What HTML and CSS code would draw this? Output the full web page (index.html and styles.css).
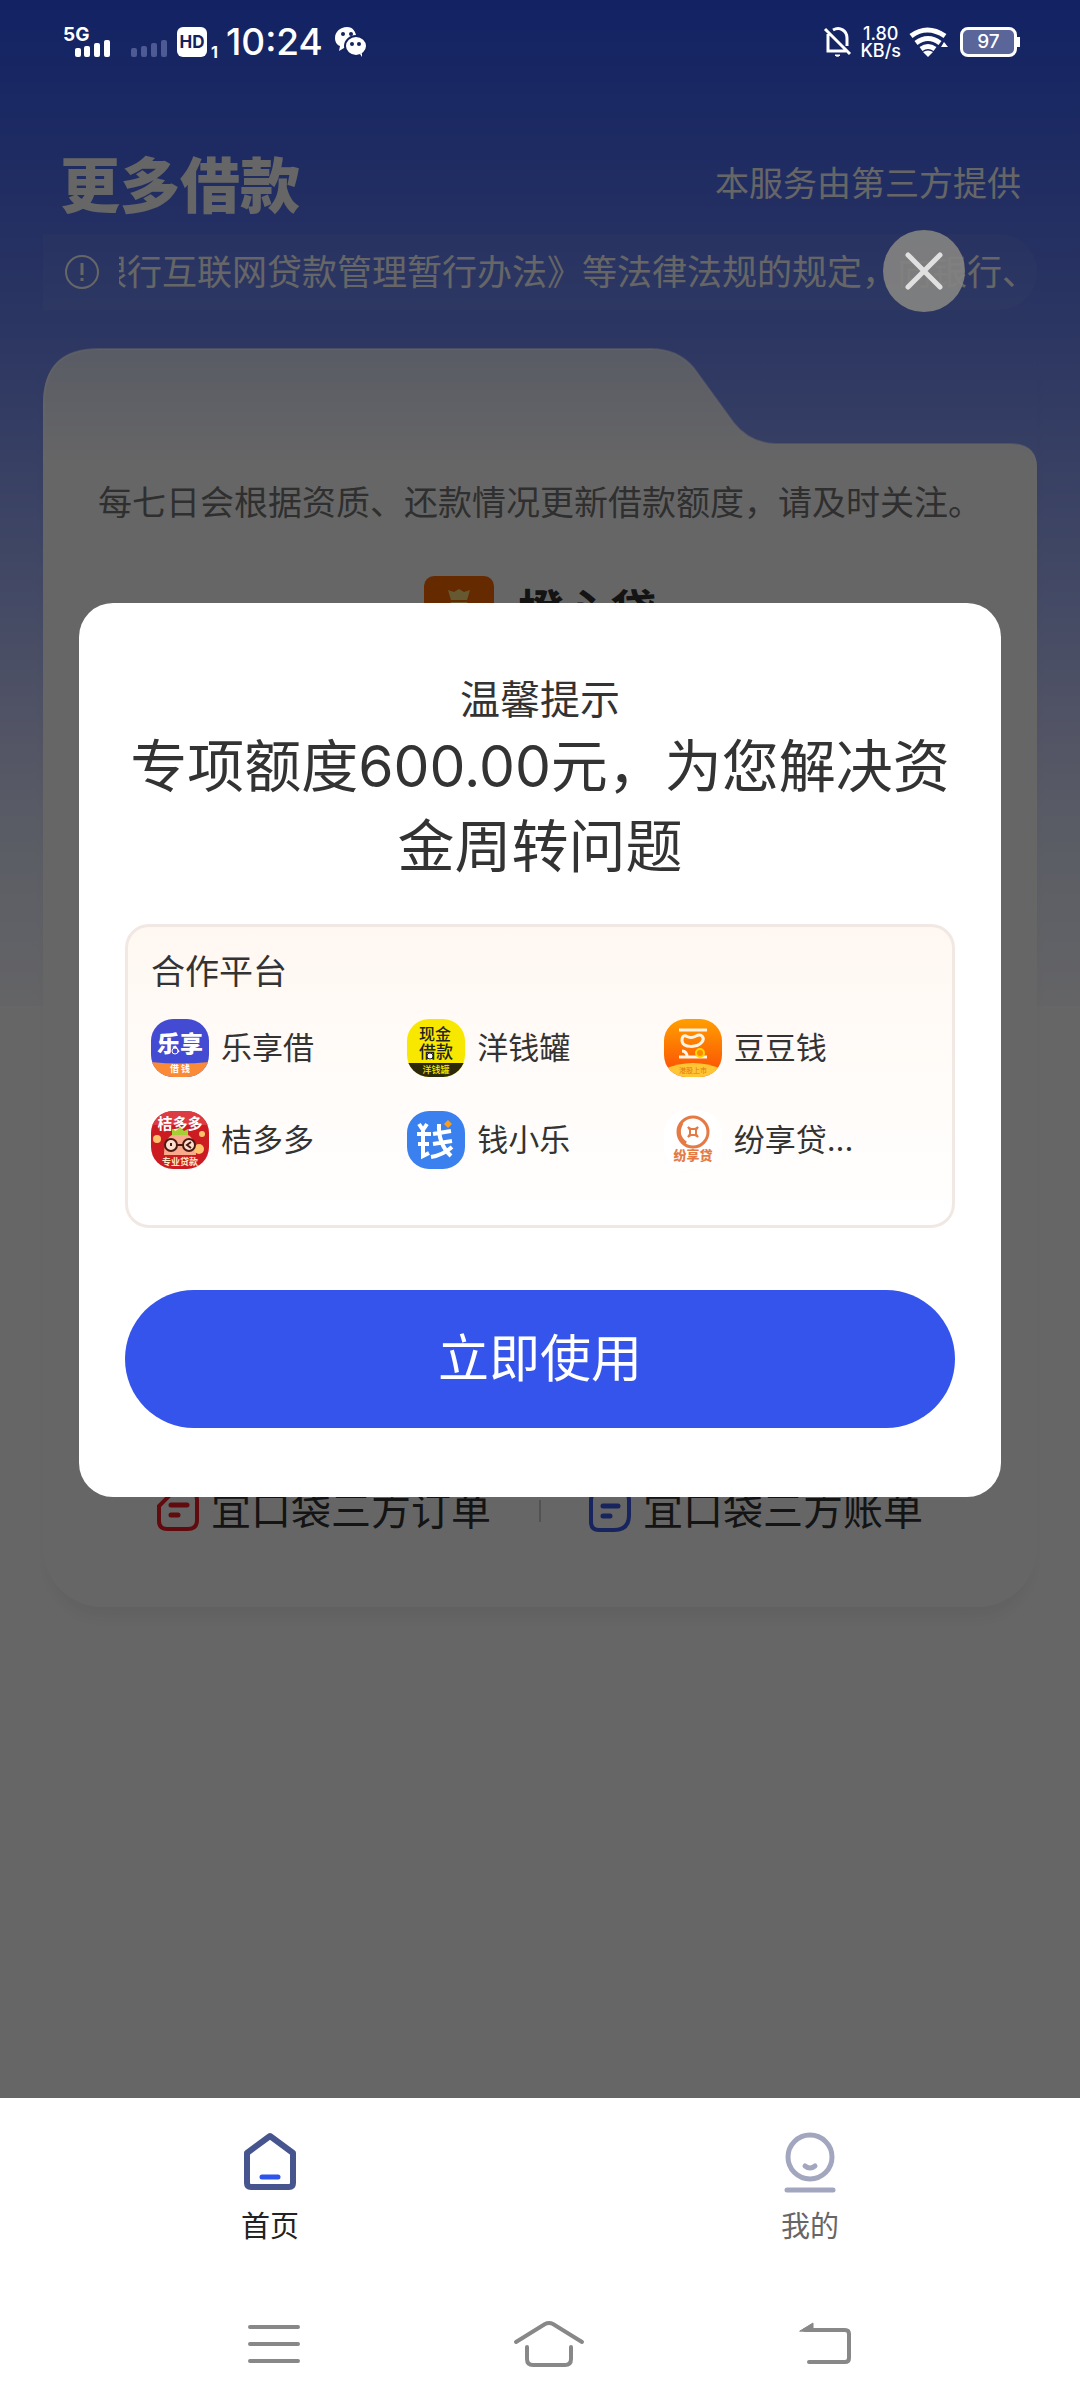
FILE: index.html
```html
<!DOCTYPE html>
<html lang="zh-CN">
<head>
<meta charset="utf-8">
<meta name="viewport" content="width=device-width">
<title>更多借款</title>
<link rel="stylesheet" href="styles.css">
</head>
<body>
<div class="stage">
    <div class="status">
        <svg class="signal" width="48" height="32" viewBox="0 0 48 32" fill="#fff">
            <text x="1" y="15" font-size="19" font-weight="700">5G</text>
            <rect x="13" y="22" width="6" height="9" rx="2"/>
            <rect x="22" y="20" width="6" height="11" rx="2"/>
            <rect x="32" y="17" width="6" height="14" rx="2"/>
            <rect x="42" y="14" width="6" height="17" rx="2"/>
        </svg>
        <svg class="signal-off" width="36" height="32" viewBox="0 0 36 32" fill="#4d5a93">
            <rect x="0" y="22" width="6" height="9" rx="2"/>
            <rect x="10" y="20" width="6" height="11" rx="2"/>
            <rect x="20" y="17" width="6" height="14" rx="2"/>
            <rect x="30" y="14" width="6" height="17" rx="2"/>
        </svg>
        <span class="hd">HD</span><span class="sim">1</span>
        <span class="time">10:24</span>
        <svg width="32" height="32" viewBox="0 0 32 32">
            <path d="M12 1C5 1 0 6 0 12c0 4 2 7 5 8l-1 5 5-3h6C24 21 24 1 12 1z" fill="#fff"/>
            <ellipse cx="21" cy="20" rx="11" ry="10" fill="#fff" stroke="#14235f" stroke-width="2"/>
            <path d="M25 28l2 3v-4z" fill="#fff"/>
            <g fill="#14235f"><circle cx="8" cy="8" r="2"/><circle cx="16" cy="8" r="2"/><circle cx="17" cy="18" r="2"/><circle cx="24" cy="18" r="2"/></g>
        </svg>
        <span class="fill"></span>
        <svg width="28" height="32" viewBox="0 0 28 32" fill="none" stroke="#fff" stroke-width="3">
            <path d="M4 8v17h18M9 4c7-4 14 1 14 8v8M1 3l25 25"/>
            <path d="M11 29a3 3 0 0 0 5 0z" fill="#fff" stroke-width="1"/>
        </svg>
        <span class="speed">1.80<br>KB/s</span>
        <svg width="40" height="32" viewBox="0 0 40 32" fill="none" stroke="#fff" stroke-width="5">
            <path d="M2 10q16-12 34 0M7 17q12-9 24 0M12 23q7-5 14 0"/>
            <path d="M14 26l5 5 5-5q-5-3-10 0z" fill="#fff" stroke="none"/>
            <path d="M32 21l3-5 4 5z" fill="#fff" stroke="none"/>
        </svg>
        <span class="battery">97</span>
    </div>

    <header>
        <h1>更多借款</h1>
        <p>本服务由第三方提供</p>
    </header>
    <div class="notice">
        <svg width="36" height="36" viewBox="0 0 36 36" fill="none" stroke="#fff" stroke-width="2">
            <circle cx="18" cy="18" r="16"/><path d="M18 9v12M18 24v3" stroke-width="3"/>
        </svg>
        <div class="marquee"><span>银行互联网贷款管理暂行办法》等法律法规的规定，向银行、</span></div>
    </div>

    <section class="card">
        <svg class="card-top" height="120" viewBox="0 0 993 120" preserveAspectRatio="none">
            <defs><linearGradient id="tab" x1="0" y1="0" x2="0" y2="1">
                <stop offset="0" stop-color="#fff" stop-opacity=".77"/><stop offset="1" stop-color="#fff"/>
            </linearGradient></defs>
            <path d="M0 120V56Q0 1 55 1H607Q634 1 650 20L690 75Q706 95 732 96H966Q993 96 993 120z" fill="url(#tab)"/>
            <path d="M1 120V56Q1 1 55 1H607Q634 1 650 20L690 75Q706 95 732 96H966Q992 96 992 120" fill="none" stroke="#fff" stroke-opacity=".5" stroke-width="2"/>
        </svg>
        <div class="card-body">
            <p class="info">每七日会根据资质、还款情况更新借款额度，请及时关注。</p>
            <div class="app">
                <svg width="70" height="70" viewBox="0 0 70 70">
                    <rect width="70" height="70" rx="10" fill="#ff6a00"/>
                    <path d="M24 14l6 2 5-3 5 3 6-2-3 10H27zM27 26h16q12 14 10 30H17q-2-16 10-30z" fill="#ffdf7c"/>
                </svg>
                <b>橙心贷</b>
            </div>
            <div class="links">
                <a href="#orders">
                    <svg width="42" height="42" viewBox="0 0 42 42" fill="none" stroke="#f21c26" stroke-width="4" stroke-linecap="round">
                        <path d="M16 2H32q8 0 8 8V30q0 9-9 9H10q-8 0-8-8V16z"/><path d="M14 15H30M14 25H21" stroke-width="5"/>
                    </svg>宜口袋三方订单</a>
                <i></i>
                <a href="#bills">
                    <svg width="42" height="42" viewBox="0 0 42 42" fill="none" stroke="#3b5be8" stroke-width="4" stroke-linecap="round">
                        <path d="M10 2H32q8 0 8 8V25q0 15-15 15H10q-8 0-8-8V10q0-8 8-8z"/><path d="M14 16H29M14 26H21" stroke-width="5"/>
                    </svg>宜口袋三方账单</a>
            </div>
        </div>
    </section>

    <div class="mask">
        <div class="dialog" role="dialog" aria-labelledby="tips">
            <h2 id="tips">温馨提示</h2>
            <p class="amount">专项额度600.00元，为您解决资金周转问题</p>
            <div class="partners">
                <h3>合作平台</h3>
                <ul>
                    <li>
                        <svg width="58" height="58" viewBox="0 0 58 58">
                            <defs><clipPath id="r"><rect width="58" height="58" rx="22"/></clipPath></defs>
                            <g clip-path="url(#r)"><rect width="58" height="58" fill="#434bd3"/><path d="M0 43q29 3 58 0v15H0z" fill="#fb8a36"/></g>
                            <text x="29" y="33" font-size="23" font-weight="900" fill="#fff" text-anchor="middle">乐享</text>
                            <circle cx="24" cy="32" r="3" fill="#434bd3" stroke="#fff" stroke-width="1"/>
                            <text x="29" y="53" font-size="9" font-weight="700" fill="#fff" text-anchor="middle">借 钱</text>
                        </svg>乐享借</li>
                    <li>
                        <svg width="58" height="58" viewBox="0 0 58 58">
                            <g clip-path="url(#r)"><rect width="58" height="58" fill="#f8e800"/><path d="M0 44h58v14H0z" fill="#2c2908"/></g>
                            <g font-weight="500" text-anchor="middle">
                                <text x="28" y="21" font-size="16" fill="#222">现金</text>
                                <text x="29" y="39" font-size="17" fill="#222">借款</text>
                                <text x="29" y="54" font-size="9" fill="#f8e800">洋钱罐</text>
                            </g>
                            <circle cx="23" cy="37" r="3" fill="#fff" stroke="#222" stroke-width="1"/>
                        </svg>洋钱罐</li>
                    <li>
                        <svg width="58" height="58" viewBox="0 0 58 58">
                            <defs><linearGradient id="bean" x1="0" y1="0" x2="0" y2="1"><stop offset="0" stop-color="#ff9f00"/><stop offset="1" stop-color="#fb4a05"/></linearGradient></defs>
                            <g clip-path="url(#r)"><rect width="58" height="58" fill="url(#bean)"/><path d="M0 50q29-12 58 0v8H0z" fill="#ffc534"/></g>
                            <g fill="none" stroke="#fff4e4" stroke-width="3"><path d="M15 11H43M15 38H43M23 38q0-6-5-6"/><path d="M22 17q5 3 10 0c6-3 9 2 6 6-5 6-19 6-20-1 0-4 1-6 4-5z"/></g>
                            <circle cx="36" cy="34" r="4" fill="#ff8a00" stroke="#ffd500" stroke-width="2"/>
                            <text x="29" y="54" font-size="7" fill="#e07a10" text-anchor="middle">港股上市</text>
                        </svg>豆豆钱</li>
                    <li>
                        <svg width="58" height="58" viewBox="0 0 58 58">
                            <g clip-path="url(#r)"><rect width="58" height="58" fill="#cc1c22"/><path d="M0 0h58v14H0z" fill="#dc3b44"/>
                                <path d="M13 44q0-22 16-22t16 22z" fill="#f9a98c"/><circle cx="6" cy="28" r="4" fill="#ffc46b"/><circle cx="48" cy="38" r="5" fill="#ffc46b"/><circle cx="51" cy="23" r="3" fill="#ffc46b"/></g>
                            <text x="29" y="18" font-size="15" font-weight="700" fill="#fff" text-anchor="middle">桔多多</text>
                            <path d="M21 18l4 2 4-4 4 4 4-2v6H21z" fill="#a4cf35"/>
                            <g fill="#ffe0cf" stroke="#4a1a12" stroke-width="2"><circle cx="20" cy="34" r="6"/><circle cx="38" cy="34" r="6"/><path d="M26 34h6M40 31l-4 3 4 3M20 32v3"/></g>
                            <text x="29" y="54" font-size="9" font-weight="700" fill="#ffe6c0" text-anchor="middle">专业贷款</text>
                        </svg>桔多多</li>
                    <li>
                        <svg width="58" height="58" viewBox="0 0 58 58">
                            <rect width="58" height="58" rx="22" fill="#3a80ee"/>
                            <g fill="none" stroke="#fff" stroke-width="4"><path d="M12 13l4 6 4-6M10 23H24M11 33H22M16 20V45l6-3"/><path d="M26 23L44 20M26 33L45 30M32 13q-1 20 12 32M45 36Q36 44 24 46"/></g>
                            <path d="M41 9l4 4-4 4-4-4z" fill="#ff9b1a"/>
                        </svg>钱小乐</li>
                    <li>
                        <svg width="58" height="58" viewBox="0 0 58 58">
                            <rect width="58" height="58" rx="22" fill="#fff"/>
                            <g fill="none" stroke="#e57a45"><circle cx="29" cy="21" r="15" stroke-width="3"/><path d="M18 12q-7 12 4 20" stroke-width="3"/><path d="M24 16l3 2h4l3-2-2 3v4l2 3-3-2h-4l-3 2 2-3v-4z" stroke-width="2"/></g>
                            <text x="29" y="49" font-size="13" font-weight="900" fill="#e57a45" text-anchor="middle">纷享贷</text>
                        </svg>纷享贷...</li>
                </ul>
            </div>
            <button type="button" class="use">立即使用</button>
        </div>
        <button type="button" class="close" aria-label="关闭">
            <svg width="40" height="40" viewBox="0 0 40 40" stroke="#e0e0e0" stroke-width="5" stroke-linecap="round"><path d="M4 4L36 36M36 4L4 36"/></svg>
        </button>
    </div>
</div>

<nav class="tabs">
    <a href="#home" class="active">
        <svg width="60" height="64" viewBox="0 0 60 64" fill="none" stroke="#46558d" stroke-width="6" stroke-linejoin="round">
            <path d="M30 7L53 24V54q0 4-4 4H11q-4 0-4-4V24z"/><path d="M22 48H38" stroke="#2f54eb" stroke-width="5" stroke-linecap="round"/>
        </svg>首页</a>
    <a href="#mine">
        <svg width="60" height="64" viewBox="0 0 60 64" fill="none" stroke="#a2a7bf" stroke-width="5" stroke-linecap="round">
            <circle cx="30" cy="28" r="22"/><path d="M25 37q5 4 10 0M7 61H53"/>
        </svg>我的</a>
</nav>
<div class="sysnav">
    <button type="button" aria-label="菜单"><svg width="52" height="44" viewBox="0 0 52 44" stroke="#888" stroke-width="4" stroke-linecap="round"><path d="M2 5H50M2 22H50M2 39H50"/></svg></button>
    <button type="button" aria-label="主页"><svg width="72" height="46" viewBox="0 0 72 46" fill="none" stroke="#888" stroke-width="4" stroke-linecap="round"><path d="M3 21L32 3q4-2 8 0L69 21M14 26V38q0 6 6 6H52q6 0 6-6V26"/></svg></button>
    <button type="button" aria-label="返回"><svg width="56" height="46" viewBox="0 0 56 46" fill="none" stroke="#888" stroke-width="4" stroke-linecap="round"><path d="M8 9H48q4 0 4 4V37q0 4-4 4H12"/><path d="M3 10L16 2V10z" fill="#888" stroke-width="1"/></svg></button>
</div>
</body>
</html>
```
FILE: styles.css
```css
* {
    box-sizing: border-box;
    margin: 0;
    padding: 0;
}
body {
    display: flex;
    flex-direction: column;
    min-height: 100vh;
    color: #333;
    background: #fff;
    font: 35px/50px Inter, "Noto Sans CJK SC", sans-serif;
}
a {
    color: inherit;
    text-decoration: none;
}
button {
    border: none;
    background: none;
    font: inherit;
    cursor: pointer;
}
svg {
    display: block;
    flex: none;
    overflow: visible;
}
.stage {
    position: relative;
    flex: 1;
    padding: 0 43px;
    background: linear-gradient(#2f55f8, #7089f5 340px, #aab9fc 600px, #d2d6fc 750px, #e6ebfd 860px, #fafaff 1006px, #fff 1006px);
}

/* status bar, stays above the mask */
.status {
    position: relative;
    z-index: 2;
    display: flex;
    align-items: center;
    height: 84px;
    padding: 0 20px 0 19px;
    color: #fff;
}
.signal-off {
    margin: 0 10px 0 21px;
}
.hd {
    width: 30px;
    border-radius: 6px;
    background: #fff;
    color: #14235f;
    font-size: 17px;
    font-weight: 700;
    line-height: 30px;
    text-align: center;
}
.sim {
    align-self: flex-end;
    margin: 0 8px 0 4px;
    padding-bottom: 24px;
    font-size: 16px;
    font-weight: 700;
    line-height: 16px;
}
.time {
    margin-right: 12px;
    font-size: 37px;
    font-weight: 500;
}
.fill {
    flex: 1;
}
.speed {
    margin: 0 8px 0 8px;
    font-size: 18px;
    font-weight: 500;
    line-height: 17px;
    text-align: center;
}
.battery {
    position: relative;
    width: 57px;
    margin-left: 11px;
    border: 3px solid #fff;
    border-radius: 8px;
    background: #5a659a;
    font-size: 19px;
    font-weight: 500;
    line-height: 24px;
    text-align: center;
}
.battery:after {
    content: "";
    position: absolute;
    top: 7px;
    right: -6px;
    width: 3px;
    height: 10px;
    background: #fff;
}

header {
    display: flex;
    align-items: center;
    justify-content: space-between;
    height: 76px;
    margin-top: 62px;
    padding: 0 16px 0 17px;
    color: #fff;
    font-size: 34px;
}
h1 {
    padding-top: 4px;
    font-size: 60px;
    font-weight: 900;
}
.notice {
    display: flex;
    align-items: center;
    height: 76px;
    margin-top: 12px;
    padding-left: 21px;
    border-radius: 0 38px 38px 0;
    background: rgba(255, 255, 255, 0.05);
    color: #fff;
}
.marquee {
    display: flex;
    flex: 1;
    justify-content: flex-end;
    overflow: hidden;
    margin-left: 19px;
    white-space: nowrap;
}

.card {
    margin-top: 38px;
    border-radius: 0 0 60px 60px;
    box-shadow: 0 16px 16px -6px rgba(0, 0, 0, 0.06);
}
.card-top {
    width: 100%;
}
.card-body {
    display: flex;
    flex-direction: column;
    align-items: center;
    min-height: 1139px;
    padding: 10px 0 71px;
    border-radius: 0 0 60px 60px;
    background: #fff;
}
.info {
    color: #777;
    font-size: 34px;
    white-space: nowrap;
}
.app {
    display: flex;
    align-items: center;
    gap: 24px;
    margin-top: 48px;
    font-size: 46px;
}
.links {
    display: flex;
    align-items: center;
    gap: 48px;
    margin-top: auto;
    font-size: 40px;
}
.links a {
    display: flex;
    align-items: center;
    gap: 12px;
}
.links i {
    width: 2px;
    height: 22px;
    background: #ccc;
}

.mask {
    position: absolute;
    inset: 0;
    display: flex;
    align-items: center;
    padding: 2px 79px 0;
    background: rgba(0, 0, 0, 0.6);
}
.dialog {
    flex: 1;
    padding: 70px 46px 69px;
    border-radius: 34px;
    background: #fff;
    text-align: center;
}
.dialog h2 {
    font-size: 40px;
    font-weight: 400;
    line-height: 54px;
}
.amount {
    font-size: 57px;
    line-height: 80px;
}
.partners {
    margin: 37px 0 62px;
    padding: 20px 32px 56px 23px;
    border: 3px solid #f1e8e3;
    border-radius: 24px;
    background: linear-gradient(#fff8f2, #fff);
    text-align: left;
}
.partners h3 {
    font-size: 34px;
    font-weight: 400;
}
.partners ul {
    display: grid;
    grid-template-columns: repeat(3, 1fr);
    gap: 34px 0;
    margin-top: 22px;
    list-style: none;
}
.partners li {
    display: flex;
    align-items: center;
    gap: 12px;
    height: 58px;
    font-size: 31px;
}
.use {
    width: 100%;
    height: 138px;
    border-radius: 69px;
    background: #3454eb;
    color: #fff;
    font-size: 51px;
}
.close {
    position: absolute;
    top: 230px;
    right: 115px;
    display: flex;
    align-items: center;
    justify-content: center;
    width: 82px;
    height: 82px;
    border-radius: 50%;
    background: rgba(130, 130, 128, 0.93);
}

.tabs {
    display: flex;
    height: 182px;
    background: #fff;
}
.tabs a {
    display: flex;
    flex: 1;
    flex-direction: column;
    align-items: center;
    gap: 12px;
    padding-top: 31px;
    color: #666;
    font-size: 29px;
    line-height: 44px;
}
.tabs .active {
    color: #222;
}
.sysnav {
    display: flex;
    justify-content: space-between;
    height: 128px;
    padding: 0 21% 0 23%;
    background: #fff;
}
.sysnav button {
    display: flex;
    align-items: center;
}
```
